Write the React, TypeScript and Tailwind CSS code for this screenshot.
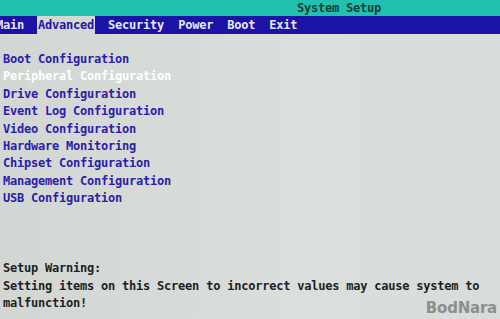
const menuItems = ["Main", "Advanced", "Security", "Power", "Boot", "Exit"];

const configItems = [
  "Boot Configuration",
  "Peripheral Configuration",
  "Drive Configuration",
  "Event Log Configuration",
  "Video Configuration",
  "Hardware Monitoring",
  "Chipset Configuration",
  "Management Configuration",
  "USB Configuration",
];

const mono = "font-['DejaVu_Sans_Mono','Liberation_Mono',monospace] text-[12px] tracking-[-0.22px] font-bold";

export default function App() {
  return (
    <div className={`relative flex h-[319px] w-[500px] flex-col overflow-hidden bg-[linear-gradient(90deg,#d3d7d4,#dadedc_60%,#d8dcda)] ${mono}`}>
      {/* title bar */}
      <div className="flex h-[16px] items-center bg-[#22c0ae] pl-[297px] text-[#0e3f38] leading-none">
        System Setup
      </div>

      {/* menu bar */}
      <div className="-ml-[4px] flex h-[18px] items-stretch gap-[14px] bg-[#1b13a6] text-[#e6e8f2]">
        {menuItems.map((item) => (
          <span
            key={item}
            className={`flex items-center leading-none ${item === "Advanced" ? "-mx-[1px] bg-[#d4d8d4] px-[1px] text-[#1d17a6]" : ""}`}
          >
            {item}
          </span>
        ))}
      </div>

      {/* config list */}
      <ul className="mt-[17px] flex flex-col pl-[3px] leading-[17.4px]">
        {configItems.map((item) => (
          <li key={item} className={item === "Peripheral Configuration" ? "text-white" : "text-[#2a20aa]"}>
            {item}
          </li>
        ))}
      </ul>

      {/* warning */}
      <div className="mt-auto pb-[7px] pl-[3px] leading-[17.2px] text-[#1e1e22]">
        <p>Setup Warning:</p>
        <p>Setting items on this Screen to incorrect values may cause system to</p>
        <p>malfunction!</p>
      </div>

      <div className="absolute bottom-[3px] right-[3px] font-['DejaVu_Sans',sans-serif] text-[15px] font-bold text-[#8d8f8e] leading-none">
        BodNara
      </div>
    </div>
  );
}
